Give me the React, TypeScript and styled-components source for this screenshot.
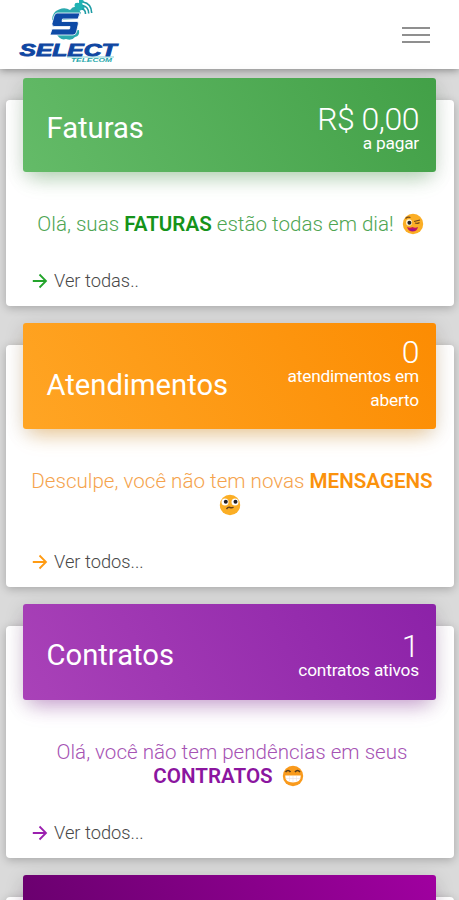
import React from 'react';
import styled, { createGlobalStyle } from 'styled-components';

const GlobalStyle = createGlobalStyle`
  * { box-sizing: border-box; }
  body {
    margin: 0;
    background: #dadada;
    font-family: Roboto, "Liberation Sans", sans-serif;
    overflow: hidden;
  }
`;

const Screen = styled.div`
  height: 900px;
  overflow: hidden;
  display: flex;
  flex-direction: column;
`;

const TopBar = styled.header`
  flex: none;
  height: 69px;
  background: #fff;
  display: flex;
  justify-content: space-between;
  align-items: flex-start;
  padding: 0 29px 0 16px;
  box-shadow: 0 1px 8px rgba(0, 0, 0, 0.42);
`;

const LogoSvg = styled.svg`
  display: block;
  width: 106px;
  height: 66px;
`;

const MenuButton = styled.button`
  width: 28px;
  height: 16px;
  margin: 27px 0 0;
  padding: 0;
  border: 0;
  background: none;
  display: flex;
  flex-direction: column;
  justify-content: flex-start;
  gap: 5px;
`;

const MenuBar = styled.span`
  height: 2px;
  width: 28px;
  background: #8f8f8f;
`;

const CardList = styled.main`
  display: flex;
  flex-direction: column;
  gap: 39px;
  padding: 31px 5.5px 0 6px;
`;

const Card = styled.section<{ $height: number }>`
  flex: none;
  height: ${(p) => p.$height}px;
  background: #fff;
  border-radius: 4px;
  box-shadow: 0 2px 10px rgba(0, 0, 0, 0.24);
  padding: 0 17.5px 0 17px;
`;

const CardHeader = styled.div<{ $height: number; $from: string; $to: string; $glow: string }>`
  height: ${(p) => p.$height}px;
  margin-top: -22.5px;
  border-radius: 3px;
  padding: 0 17px 0 23.5px;
  display: flex;
  justify-content: space-between;
  color: #fff;
  background: linear-gradient(60deg, ${(p) => p.$from}, ${(p) => p.$to});
  box-shadow: 0 12px 20px -8px ${(p) => p.$glow}, 0 4px 20px rgba(0, 0, 0, 0.14);
`;

const Title = styled.h2<{ $top: number }>`
  margin: ${(p) => p.$top}px 0 0;
  font-size: 29.2px;
  line-height: 36px;
  font-weight: 400;
  white-space: nowrap;
`;

const Summary = styled.div<{ $top: number }>`
  padding-top: ${(p) => p.$top}px;
  text-align: right;
  white-space: nowrap;
`;

const Figure = styled.div`
  font-size: 32px;
  line-height: 24px;
  font-weight: 300;
  letter-spacing: -0.5px;
`;

const Caption = styled.div`
  font-size: 17.3px;
  line-height: 24px;
  font-weight: 400;
  letter-spacing: -0.2px;
`;

const Message = styled.div<{ $color: string }>`
  margin: 39.5px -12px 0 -10px;
  color: ${(p) => p.$color};
`;

const Line = styled.div<{ $indent?: number; $outdent?: number }>`
  height: 24px;
  padding-left: ${(p) => p.$indent ?? 0}px;
  padding-right: ${(p) => p.$outdent ?? 0}px;
  display: flex;
  justify-content: center;
  align-items: center;
  white-space: pre;
  font-size: 20.6px;
  line-height: 24px;
  font-weight: 300;
`;

const Strong = styled.strong<{ $color: string }>`
  font-weight: 600;
  color: ${(p) => p.$color};
`;

const EmojiSvg = styled.svg<{ $gap?: number }>`
  flex: none;
  width: 22px;
  height: 22px;
  margin-left: ${(p) => p.$gap ?? 0}px;
`;

const MoreLink = styled.a`
  margin: 33px 0 0 9px;
  height: 24px;
  display: flex;
  align-items: center;
  gap: 6px;
  color: #484848;
  font-size: 18.3px;
  font-weight: 300;
  white-space: nowrap;
`;

const ArrowSvg = styled.svg`
  width: 16px;
  height: 16px;
`;

const Logo = () => (
  <LogoSvg viewBox="16 0 106 66" role="img" aria-label="Select Telecom">
    <path d="M52 20Q52 12 59 9.5Q65 7 70 10Q73 6 77 7L81 13L77 19L60 20Z" fill="#2aa9ae" />
    <path d="M56 33L79 30Q80 36 75 37Q72 41 66 39Q60 41 56 33Z" fill="#2aa9ae" />
    <path d="M75 7Q73 2 79 3L79 0Q82 -1 84 1L82 4Q86 6 84 9L79 11Z" fill="#1fb3b4" />
    <path d="M57 13H80L78 19H62.5L62 21.5H77Q79 22 78.3 24L76.5 32Q75.8 35 73 35H50L52 29H69.5L70 26.5H54Q51.5 26 52 23.5L54 16Q55 13 57 13Z" fill="#0e4aa6" stroke="#fff" strokeWidth=".8" />
    <g fill="none" stroke="#1d9ba4" strokeWidth="1.6">
      <path d="M82 9Q85.500 9.5 85.5 14" />
      <path d="M82.5 5.5Q88.5 6.5 88.7 13.5" />
      <path d="M83 2Q91.5 3.5 91.7 13" />
    </g>
    <text x="19.5" y="55.800" textLength="97" lengthAdjust="spacingAndGlyphs" fontFamily="Liberation Sans, sans-serif" fontSize="16" fontWeight="700" fontStyle="italic" fill="#0f46a2" stroke="#0f46a2" strokeWidth=".8">SELECT</text>
    <path d="M67 57H114" stroke="#33afb8" strokeWidth=".6" />
    <text x="71" y="62.3" textLength="41" lengthAdjust="spacingAndGlyphs" fontFamily="Liberation Sans, sans-serif" fontSize="5.5" fontWeight="700" fontStyle="italic" fill="#26a8ab">TELECOM</text>
  </LogoSvg>
);

type Mood = 'wink' | 'worried' | 'grin';

const Emoji = ({ mood, gap }: { mood: Mood; gap?: number }) => (
  <EmojiSvg viewBox="0 0 22 22" $gap={gap}>
    <circle cx="11" cy="11" r="10.2" fill={mood === 'grin' ? '#f99a1c' : '#fbae25'} />
    {mood === 'wink' && (
      <>
        <ellipse cx="7" cy="9.5" rx="2.9" ry="3.2" fill="#fff5d8" />
        <circle cx="7.4" cy="9.8" r="2" fill="#27232b" />
        <path d="M12 8.5L18 7M13 10Q16 11 17.5 9.5M3.5 5.5Q6 3.5 8.5 4.5" fill="none" stroke="#70481d" strokeWidth="1.2" />
        <path d="M5 14Q8 15.5 10.5 14Q13 15.5 16 14Q15 18.5 10.5 18.5Q6.5 18.5 5 14Z" fill="#c3185c" />
        <path d="M7.5 16.5Q10.5 15.5 13.5 16.5Q11 19.5 7.5 16.5Z" fill="#951395" />
      </>
    )}
    {mood === 'worried' && (
      <>
        <circle cx="6" cy="8" r="3.5" fill="#fff" />
        <circle cx="16" cy="8" r="3.5" fill="#fff" />
        <circle cx="6.8" cy="7.8" r="2" fill="#242127" />
        <circle cx="16.5" cy="7.8" r="2" fill="#242127" />
        <path d="M7.5 15Q9 12.8 11 13.5T14.5 13" fill="none" stroke="#654019" strokeWidth="1.4" />
      </>
    )}
    {mood === 'grin' && (
      <>
        <path d="M3.5 7Q6 4 8.5 7M13 7Q15.5 4 18 7" fill="none" stroke="#563b1c" strokeWidth="1.7" />
        <path d="M3.2 10.5H18.8Q19 17.5 11 17.5Q3 17.5 3.2 10.5Z" fill="#fff" />
        <path d="M4 13.5H18M7.5 11V16.5M11 11V17M14.5 11V16.5" stroke="#eadde2" strokeWidth=".6" />
      </>
    )}
  </EmojiSvg>
);

const More = ({ color, children }: { color: string; children: React.ReactNode }) => (
  <MoreLink>
    <ArrowSvg viewBox="0 0 16 16" fill="none" stroke={color} strokeWidth="1.8">
      <path d="M.8 8H14M7.5 1.5L14 8L7.5 14.5" />
    </ArrowSvg>
    {children}
  </MoreLink>
);

export default function App() {
  return (
    <>
      <GlobalStyle />
      <Screen>
        <TopBar>
          <Logo />
          <MenuButton aria-label="Menu">
            <MenuBar />
            <MenuBar />
            <MenuBar />
          </MenuButton>
        </TopBar>
        <CardList>
          <Card $height={206}>
            <CardHeader $height={94.5} $from="#64bb68" $to="#42a047" $glow="rgba(76,175,80,.38)">
              <Title $top={32.5}>Faturas</Title>
              <Summary $top={29.5}>
                <Figure>R$ 0,00</Figure>
                <Caption>a pagar</Caption>
              </Summary>
            </CardHeader>
            <Message $color="#4ea552">
              <Line>
                Olá, suas <Strong $color="#16931a">FATURAS</Strong> estão todas em dia!
                <Emoji mood="wink" gap={8} />
              </Line>
            </Message>
            <More color="#23a42b">Ver todas..</More>
          </Card>
          <Card $height={242}>
            <CardHeader $height={106.5} $from="#ffa524" $to="#fc8c02" $glow="rgba(255,152,0,.38)">
              <Title $top={44.5}>Atendimentos</Title>
              <Summary $top={17}>
                <Figure>0</Figure>
                <Caption>atendimentos em</Caption>
                <Caption>aberto</Caption>
              </Summary>
            </CardHeader>
            <Message $color="#f5a34d">
              <Line $indent={3}>
                Desculpe, você não tem novas <Strong $color="#fb920c">MENSAGENS</Strong>
              </Line>
              <Line $outdent={2}>
                <Emoji mood="worried" />
              </Line>
            </Message>
            <More color="#ff9b13">Ver todos...</More>
          </Card>
          <Card $height={232}>
            <CardHeader $height={96.5} $from="#a942b8" $to="#8c22a8" $glow="rgba(156,39,176,.38)">
              <Title $top={33}>Contratos</Title>
              <Summary $top={30.5}>
                <Figure>1</Figure>
                <Caption>contratos ativos</Caption>
              </Summary>
            </CardHeader>
            <Message $color="#a653b4">
              <Line $indent={3}>Olá, você não tem pendências em seus</Line>
              <Line $outdent={4}>
                <Strong $color="#8b159f">CONTRATOS</Strong>
                <Emoji mood="grin" gap={9} />
              </Line>
            </Message>
            <More color="#9b20af">Ver todos...</More>
          </Card>
          <Card $height={200}>
            <CardHeader $height={96} $from="#65006a" $to="#a000a0" $glow="rgba(128,0,128,.38)" />
          </Card>
        </CardList>
      </Screen>
    </>
  );
}
